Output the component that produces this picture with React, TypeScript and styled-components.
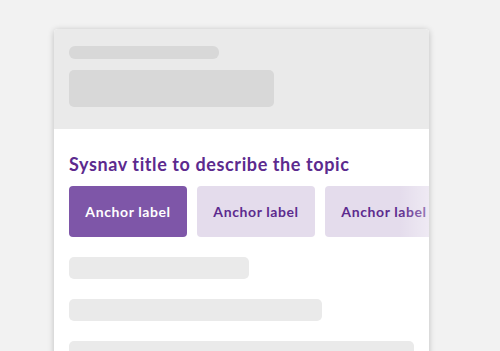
import React from 'react';
import styled, { createGlobalStyle } from 'styled-components';

const GlobalStyle = createGlobalStyle`
  html, body {
    margin: 0;
    padding: 0;
    background: #f2f2f2;
    font-family: Lato, 'Open Sans', sans-serif;
  }
  #root {
    height: 351px;
    overflow: hidden;
  }
`;

const Stage = styled.div`
  padding: 29px 0 0 54px;
`;

const Card = styled.div`
  width: 375px;
  height: 340px;
  background: #ffffff;
  border-radius: 4px 4px 0 0;
  box-shadow: 0 1px 6px rgba(0, 0, 0, 0.22);
  overflow: hidden;
  display: flex;
  flex-direction: column;
`;

const Header = styled.div`
  height: 100px;
  box-sizing: border-box;
  background: #eaeaea;
  padding: 17px 15px 0;
  display: flex;
  flex-direction: column;
  gap: 11px;
`;

const Skeleton = styled.div<{ $w: number; $h: number; $tone?: 'dark' | 'light'; $r?: number }>`
  width: ${(p) => p.$w}px;
  height: ${(p) => p.$h}px;
  border-radius: ${(p) => p.$r ?? 5}px;
  background: ${(p) => (p.$tone === 'dark' ? '#d8d8d8' : '#eaeaea')};
  flex-shrink: 0;
`;

const Body = styled.div`
  padding: 23px 15px 0;
  display: flex;
  flex-direction: column;
`;

const Title = styled.h2`
  margin: 0;
  font-size: 18px;
  line-height: 24px;
  font-weight: 700;
  color: #5c2a8e;
  letter-spacing: 0.6px;
`;

const AnchorRow = styled.div`
  position: relative;
  display: flex;
  gap: 10px;
  margin: 10px -15px 0 0;
  overflow: hidden;

  &::after {
    content: '';
    position: absolute;
    top: 0;
    right: 0;
    bottom: 0;
    width: 30px;
    background: linear-gradient(to right, rgba(255, 255, 255, 0), rgba(255, 255, 255, 0.4));
  }
`;

const Anchor = styled.a<{ $active?: boolean }>`
  flex: 0 0 118px;
  height: 51px;
  border-radius: 4px;
  display: flex;
  align-items: center;
  justify-content: center;
  font-size: 14px;
  font-weight: 700;
  letter-spacing: 0.6px;
  text-decoration: none;
  white-space: nowrap;
  background: ${(p) => (p.$active ? '#7e56a8' : '#e4dcec')};
  color: ${(p) => (p.$active ? '#ffffff' : '#5c2a8e')};
`;

const Lines = styled.div`
  margin-top: 20px;
  display: flex;
  flex-direction: column;
  gap: 20px;
`;

const App: React.FC = () => {
  const anchors = ['Anchor label', 'Anchor label', 'Anchor label'];

  return (
    <>
      <GlobalStyle />
      <Stage>
        <Card>
          <Header>
            <Skeleton $w={150} $h={13} $tone="dark" $r={6} />
            <Skeleton $w={205} $h={37} $tone="dark" $r={5} />
          </Header>
          <Body>
            <Title>Sysnav title to describe the topic</Title>
            <AnchorRow>
              {anchors.map((label, i) => (
                <Anchor key={i} href="#" $active={i === 0}>
                  {label}
                </Anchor>
              ))}
            </AnchorRow>
            <Lines>
              <Skeleton $w={180} $h={22} />
              <Skeleton $w={253} $h={22} />
              <Skeleton $w={345} $h={22} />
            </Lines>
          </Body>
        </Card>
      </Stage>
    </>
  );
};

export default App;
